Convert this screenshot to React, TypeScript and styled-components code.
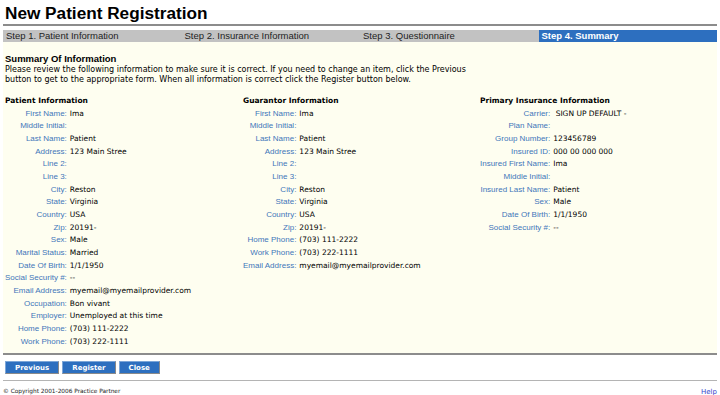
import { Fragment } from "react";
import { createGlobalStyle, styled } from "styled-components";

const GlobalStyle = createGlobalStyle`
  html, body {
    margin: 0;
    padding: 0;
    background: #ffffff;
  }
`;

const Page = styled.div`
  width: 714px;
  padding: 0 3px;
  font-family: "DejaVu Sans", Verdana, sans-serif;
  color: #000;
`;

const Title = styled.h1`
  margin: 0;
  padding: 3px 0 0 2px;
  height: 21px;
  font-family: "Liberation Sans", Arial, sans-serif;
  font-size: 17.2px;
  font-weight: bold;
  line-height: 20px;
  border-bottom: 2px solid #8c8c8c;
`;

const StepBar = styled.div`
  margin-top: 4px;
  display: grid;
  grid-template-columns: repeat(4, 1fr);
  height: 12px;
  background: #c2c2c2;
  font-family: "Liberation Sans", Arial, sans-serif;
  font-size: 9.5px;
  line-height: 12px;
`;

const Step = styled.div<{ $active?: boolean }>`
  padding-left: 3px;
  color: ${(p) => (p.$active ? "#ffffff" : "#222")};
  background: ${(p) => (p.$active ? "#2d6fbf" : "transparent")};
  font-weight: ${(p) => (p.$active ? "bold" : "normal")};
`;

const Content = styled.div`
  background: #fefef0;
  padding: 11px 2px 6px;
`;

const SectionTitle = styled.div`
  font-family: "Liberation Sans", Arial, sans-serif;
  font-size: 9.5px;
  font-weight: bold;
  line-height: 12px;
`;

const Intro = styled.p`
  margin: 0;
  font-size: 8px;
  line-height: 10px;
`;

const Columns = styled.div`
  margin-top: 10px;
  display: grid;
  grid-template-columns: 238px 237px 1fr;
`;

const ColumnTitle = styled.div`
  font-size: 7.5px;
  font-weight: bold;
  line-height: 12px;
`;

const Fields = styled.div`
  display: grid;
  grid-template-columns: max-content 1fr;
  grid-auto-rows: 12.67px;
  column-gap: 3px;
  align-items: center;
`;

const Label = styled.div`
  text-align: right;
  font-family: "Liberation Sans", Arial, sans-serif;
  font-size: 8px;
  color: #3f76ba;
  white-space: nowrap;
`;

const Value = styled.div`
  font-size: 7.5px;
  white-space: pre;
`;

const Actions = styled.div`
  border-top: 2px solid #8c8c8c;
  border-bottom: 1px solid #b4b4b4;
  padding: 6px 2px 6px;
  display: flex;
  gap: 3px;
`;

const Button = styled.button`
  height: 13px;
  padding: 0 9px;
  background: #2d6fbf;
  color: #fff;
  font-family: "DejaVu Sans", Verdana, sans-serif;
  font-size: 7px;
  font-weight: bold;
  border: 1px solid;
  border-color: #7ca6d8 #8a8a8a #8a8a8a #7ca6d8;
  line-height: 10px;
  cursor: pointer;
`;

const Footer = styled.div`
  display: flex;
  justify-content: space-between;
  align-items: center;
  padding: 4px 0 0;
`;

const Copyright = styled.div`
  font-size: 5.8px;
  color: #222;
`;

const HelpLink = styled.a`
  font-size: 7px;
  color: #3344cc;
  text-decoration: none;
  margin-top: 3px;
`;

type Field = [string, string];

const patient: Field[] = [
  ["First Name:", "Ima"],
  ["Middle Initial:", ""],
  ["Last Name:", "Patient"],
  ["Address:", "123 Main Stree"],
  ["Line 2:", ""],
  ["Line 3:", ""],
  ["City:", "Reston"],
  ["State:", "Virginia"],
  ["Country:", "USA"],
  ["Zip:", "20191-"],
  ["Sex:", "Male"],
  ["Marital Status:", "Married"],
  ["Date Of Birth:", "1/1/1950"],
  ["Social Security #:", "--"],
  ["Email Address:", "myemail@myemailprovider.com"],
  ["Occupation:", "Bon vivant"],
  ["Employer:", "Unemployed at this time"],
  ["Home Phone:", "(703) 111-2222"],
  ["Work Phone:", "(703) 222-1111"],
];

const guarantor: Field[] = [
  ["First Name:", "Ima"],
  ["Middle Initial:", ""],
  ["Last Name:", "Patient"],
  ["Address:", "123 Main Stree"],
  ["Line 2:", ""],
  ["Line 3:", ""],
  ["City:", "Reston"],
  ["State:", "Virginia"],
  ["Country:", "USA"],
  ["Zip:", "20191-"],
  ["Home Phone:", "(703) 111-2222"],
  ["Work Phone:", "(703) 222-1111"],
  ["Email Address:", "myemail@myemailprovider.com"],
];

const insurance: Field[] = [
  ["Carrier:", " SIGN UP DEFAULT -"],
  ["Plan Name:", ""],
  ["Group Number:", "123456789"],
  ["Insured ID:", "000 00 000 000"],
  ["Insured First Name:", "Ima"],
  ["Middle Initial:", ""],
  ["Insured Last Name:", "Patient"],
  ["Sex:", "Male"],
  ["Date Of Birth:", "1/1/1950"],
  ["Social Security #:", "--"],
];

const InfoColumn = ({ title, fields }: { title: string; fields: Field[] }) => (
  <div>
    <ColumnTitle>{title}</ColumnTitle>
    <Fields>
      {fields.map(([label, value], i) => (
        <Fragment key={i}>
          <Label>{label}</Label>
          <Value>{value}</Value>
        </Fragment>
      ))}
    </Fields>
  </div>
);

const steps = [
  "Step 1. Patient Information",
  "Step 2. Insurance Information",
  "Step 3. Questionnaire",
  "Step 4. Summary",
];

export default function App() {
  return (
    <>
      <GlobalStyle />
      <Page>
        <Title>New Patient Registration</Title>
        <StepBar>
          {steps.map((s, i) => (
            <Step key={s} $active={i === 3}>
              {s}
            </Step>
          ))}
        </StepBar>
        <Content>
          <SectionTitle>Summary Of Information</SectionTitle>
          <Intro>
            Please review the following information to make sure it is correct. If you need to
            change an item, click the Previous
            <br />
            button to get to the appropriate form. When all information is correct click the
            Register button below.
          </Intro>
          <Columns>
            <InfoColumn title="Patient Information" fields={patient} />
            <InfoColumn title="Guarantor Information" fields={guarantor} />
            <InfoColumn title="Primary Insurance Information" fields={insurance} />
          </Columns>
        </Content>
        <Actions>
          <Button>Previous</Button>
          <Button>Register</Button>
          <Button>Close</Button>
        </Actions>
        <Footer>
          <Copyright>© Copyright 2001-2006 Practice Partner</Copyright>
          <HelpLink href="#">Help</HelpLink>
        </Footer>
      </Page>
    </>
  );
}
